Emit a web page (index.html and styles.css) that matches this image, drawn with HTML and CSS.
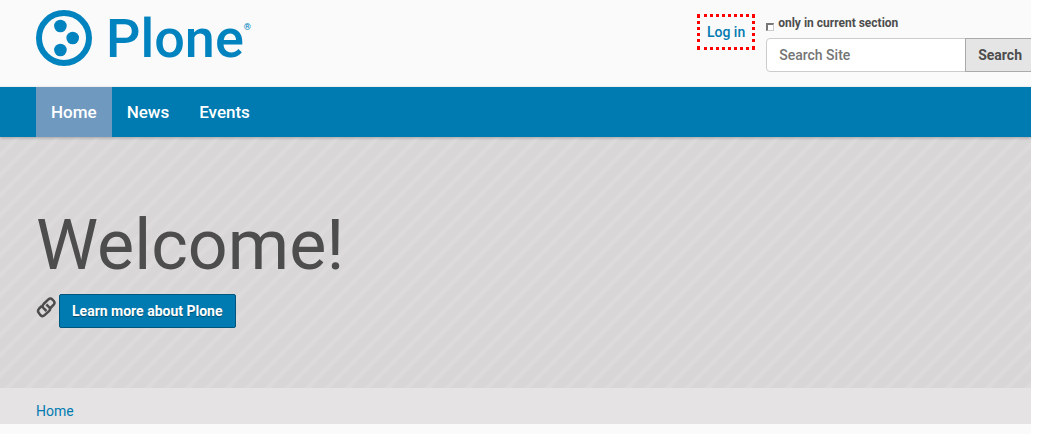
FILE: index.html
```html
<!DOCTYPE html>
<html lang="en">
<head>
<meta charset="utf-8">
<title>Plone</title>
<link rel="stylesheet" href="styles.css">
</head>
<body>
<div class="page">
  <header class="header">
    <a class="logo" href="#" aria-label="Plone">
      <svg class="logo-mark" viewBox="0 0 56 56" aria-hidden="true">
        <circle cx="28" cy="28" r="25" fill="none" stroke="currentColor" stroke-width="6"/>
        <circle cx="24.400" cy="16" r="6.300"/>
        <circle cx="36.700" cy="28" r="6.300"/>
        <circle cx="24.400" cy="40" r="6.300"/>
      </svg>
      <span class="logo-name">Plone</span><span class="logo-reg">®</span>
    </a>
    <div class="tools">
      <a class="login" href="#">Log in</a>
      <form class="search">
        <label class="section"><input class="section-box" type="checkbox">only in current section</label>
        <div class="search-row">
          <input class="search-input" type="text" placeholder="Search Site" aria-label="Search Site">
          <button class="search-button" type="button">Search</button>
        </div>
      </form>
    </div>
  </header>
  <nav class="nav">
    <a class="nav-link active" href="#">Home</a>
    <a class="nav-link" href="#">News</a>
    <a class="nav-link" href="#">Events</a>
  </nav>
  <section class="hero">
    <h1 class="hero-title">Welcome!</h1>
    <div class="hero-action">
      <svg class="link-icon" viewBox="0 0 20 24" aria-hidden="true">
        <path d="M14.500 12 17.500 9Q19.400 7 17.800 5L16.400 3.500Q14.400 1.500 12.400 3.400L7.600 8Q5.700 10 7.300 11.800L10.500 15M5.800 10 3 12.700Q1.200 14.800 2.700 16.800L4.300 18.900Q6.200 21.200 8.300 19.400L13 15.200Q15 13.200 13.300 11.300L10.300 8.500"/>
      </svg>
      <a class="hero-button" href="#">Learn more about Plone</a>
    </div>
  </section>
  <div class="crumbs"><a href="#">Home</a></div>
</div>
</body>
</html>
```
FILE: styles.css
```css
* { box-sizing: border-box; }
html { background: #fff; }
body {
  margin: 0;
  padding-right: 13px;
  font: 14px/20px Roboto, "Liberation Sans", sans-serif;
  color: #4d4d4d;
}
a { color: #007bb1; text-decoration: none; }
.page { min-height: 100vh; background: #fafafa; overflow: hidden; }
.header {
  display: flex;
  justify-content: space-between;
  align-items: flex-start;
  height: 87px;
  padding: 10px 0 0 36px;
}
.logo { display: flex; color: #0083be; }
.logo-mark { width: 56px; height: 56px; margin-right: 14px; fill: currentColor; }
.logo-name { font-size: 54px; line-height: 58px; font-weight: 500; }
.logo-reg { font-size: 9px; line-height: 12px; font-weight: 700; padding-top: 11px; }
.tools { display: flex; align-items: flex-start; gap: 11px; padding-top: 4px; }
.login {
  padding: 5px 7px;
  border: 3px dotted #f00;
  font-weight: 500;
}
.section {
  display: flex;
  align-items: center;
  gap: 4px;
  height: 24px;
  padding-bottom: 6px;
  font-size: 12px;
  font-weight: 700;
}
.section-box {
  appearance: none;
  width: 8px;
  height: 8px;
  margin: 8px 0 0;
  border: 1px solid #ccc;
  border-top: 2px solid #777;
  border-left: 2px solid #777;
  background: #fff;
}
.search-row { display: flex; }
.search-input {
  width: 200px;
  height: 34px;
  padding: 0 12px;
  border: 1px solid #ccc;
  border-radius: 4px 0 0 4px;
  background: #fff;
  font: 500 14px/20px Roboto, "Liberation Sans", sans-serif;
  color: #4d4d4d;
}
.search-input::placeholder { color: #757575; opacity: 1; }
.search-button {
  height: 34px;
  margin-left: -1px;
  padding: 0 9px 0 12px;
  border: 1px solid #aaa;
  border-right: 0;
  background: #e5e5e5;
  font: 700 14px/20px Roboto, "Liberation Sans", sans-serif;
  color: #4d4d4d;
}
.nav {
  position: relative;
  display: flex;
  height: 50px;
  padding-left: 36px;
  background: #007bb1;
  box-shadow: 0 1px 3px rgba(0, 0, 0, .25);
}
.nav-link {
  padding: 0 15px;
  font-size: 17px;
  line-height: 50px;
  font-weight: 500;
  color: #fff;
}
.nav-link.active { background: #7099bf; }
.hero {
  height: 251px;
  padding: 73px 36px 0;
  background: linear-gradient(135deg, #dcdadb 5%, #d8d6d7 5% 40%, #dcdadb 40% 55%, #d8d6d7 55% 90%, #dcdadb 90%) 0 0 / 20px 20px;
}
.hero-title { margin: 0 0 14px; font-size: 70px; line-height: 70px; font-weight: 400; }
.hero-action { display: flex; gap: 3px; }
.link-icon {
  width: 20px;
  height: 24px;
  margin-top: 2px;
  fill: none;
  stroke: #4d4d4d;
  stroke-width: 2.500;
}
.hero-button {
  padding: 6px 12px;
  border: 1px solid #00567d;
  border-radius: 2px;
  background: #007bb1;
  color: #fff;
  font-weight: 700;
  text-shadow: 0 1px 1px rgba(0, 0, 0, .4);
}
.crumbs { padding: 13px 36px 3px; background: #e5e3e4; }
```
